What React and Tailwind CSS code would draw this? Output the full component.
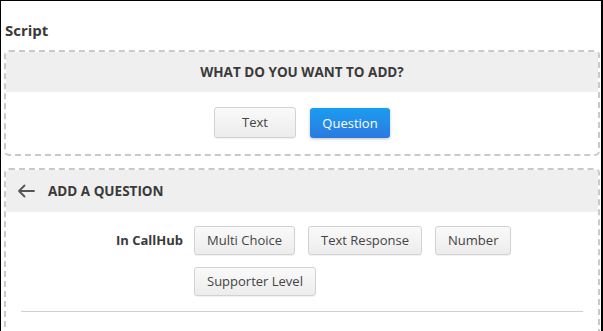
export default function App() {
  const btn =
    "rounded-[3px] border border-[#d2d2d2] bg-gradient-to-b from-[#fafafa] to-[#ececec] text-[13px] text-[#444] shadow-[0_1px_1px_rgba(0,0,0,0.06)] leading-none";
  return (
    <div
      className="w-[603px] h-[331px] overflow-hidden bg-white border-l border-t border-r-2 border-black text-[#333]"
      style={{ fontFamily: '"Open Sans", "Liberation Sans", sans-serif' }}
    >
      <div className="pl-[4px] pt-[18px] text-[15px] font-bold leading-[22px] text-[#3a3a3a]">Script</div>
      <div className="mt-[9px] ml-[3px] mr-[1px] rounded-[5px] border-2 border-dashed border-[#c9c9c9] overflow-hidden">
        <div className="h-[40px] bg-[#efefef] flex items-center justify-center text-[13.5px] font-bold text-[#3a3a3a] uppercase">
          What do you want to add?
        </div>
        <div className="flex justify-center gap-[14px] pt-[15px] pb-[16px]">
          <button className={btn + " w-[82px] h-[31px]"}>Text</button>
          <button className="w-[80px] h-[30px] mt-[1px] rounded-[3px] bg-gradient-to-b from-[#199cf1] to-[#2a7ae0] text-white text-[13px] leading-none shadow-[0_1px_3px_rgba(0,0,0,0.25)]">
            Question
          </button>
        </div>
      </div>
      <div className="mt-[12px] ml-[3px] mr-[1px] rounded-[5px] border-2 border-dashed border-[#c9c9c9] overflow-hidden h-[200px]">
        <div className="h-[42px] bg-[#efefef] flex items-center pl-[11px] gap-[13px] text-[13.5px] font-bold text-[#3a3a3a] uppercase">
          <svg width="18" height="14" viewBox="0 0 18 14" fill="none" stroke="#555" strokeWidth="1.8" strokeLinecap="round" strokeLinejoin="round">
            <path d="M17 7H2M7.5 1.5L2 7l5.5 5.5" />
          </svg>
          <span>Add a question</span>
        </div>
        <div className="mx-[15px] pt-[14px] pb-[15px] border-b border-[#cfcfcf] flex">
          <div className="w-[162px] text-right text-[13px] font-bold text-[#3a3a3a] pt-[5px] leading-[18px]">In CallHub</div>
          <div className="ml-[11px] flex flex-wrap gap-x-[13px] gap-y-[12px] w-[380px]">
            <button className={btn + " h-[29px] px-[12px]"}>Multi Choice</button>
            <button className={btn + " h-[29px] px-[12px]"}>Text Response</button>
            <button className={btn + " h-[29px] px-[12px]"}>Number</button>
            <button className={btn + " h-[29px] px-[12px]"}>Supporter Level</button>
          </div>
        </div>
      </div>
    </div>
  );
}
